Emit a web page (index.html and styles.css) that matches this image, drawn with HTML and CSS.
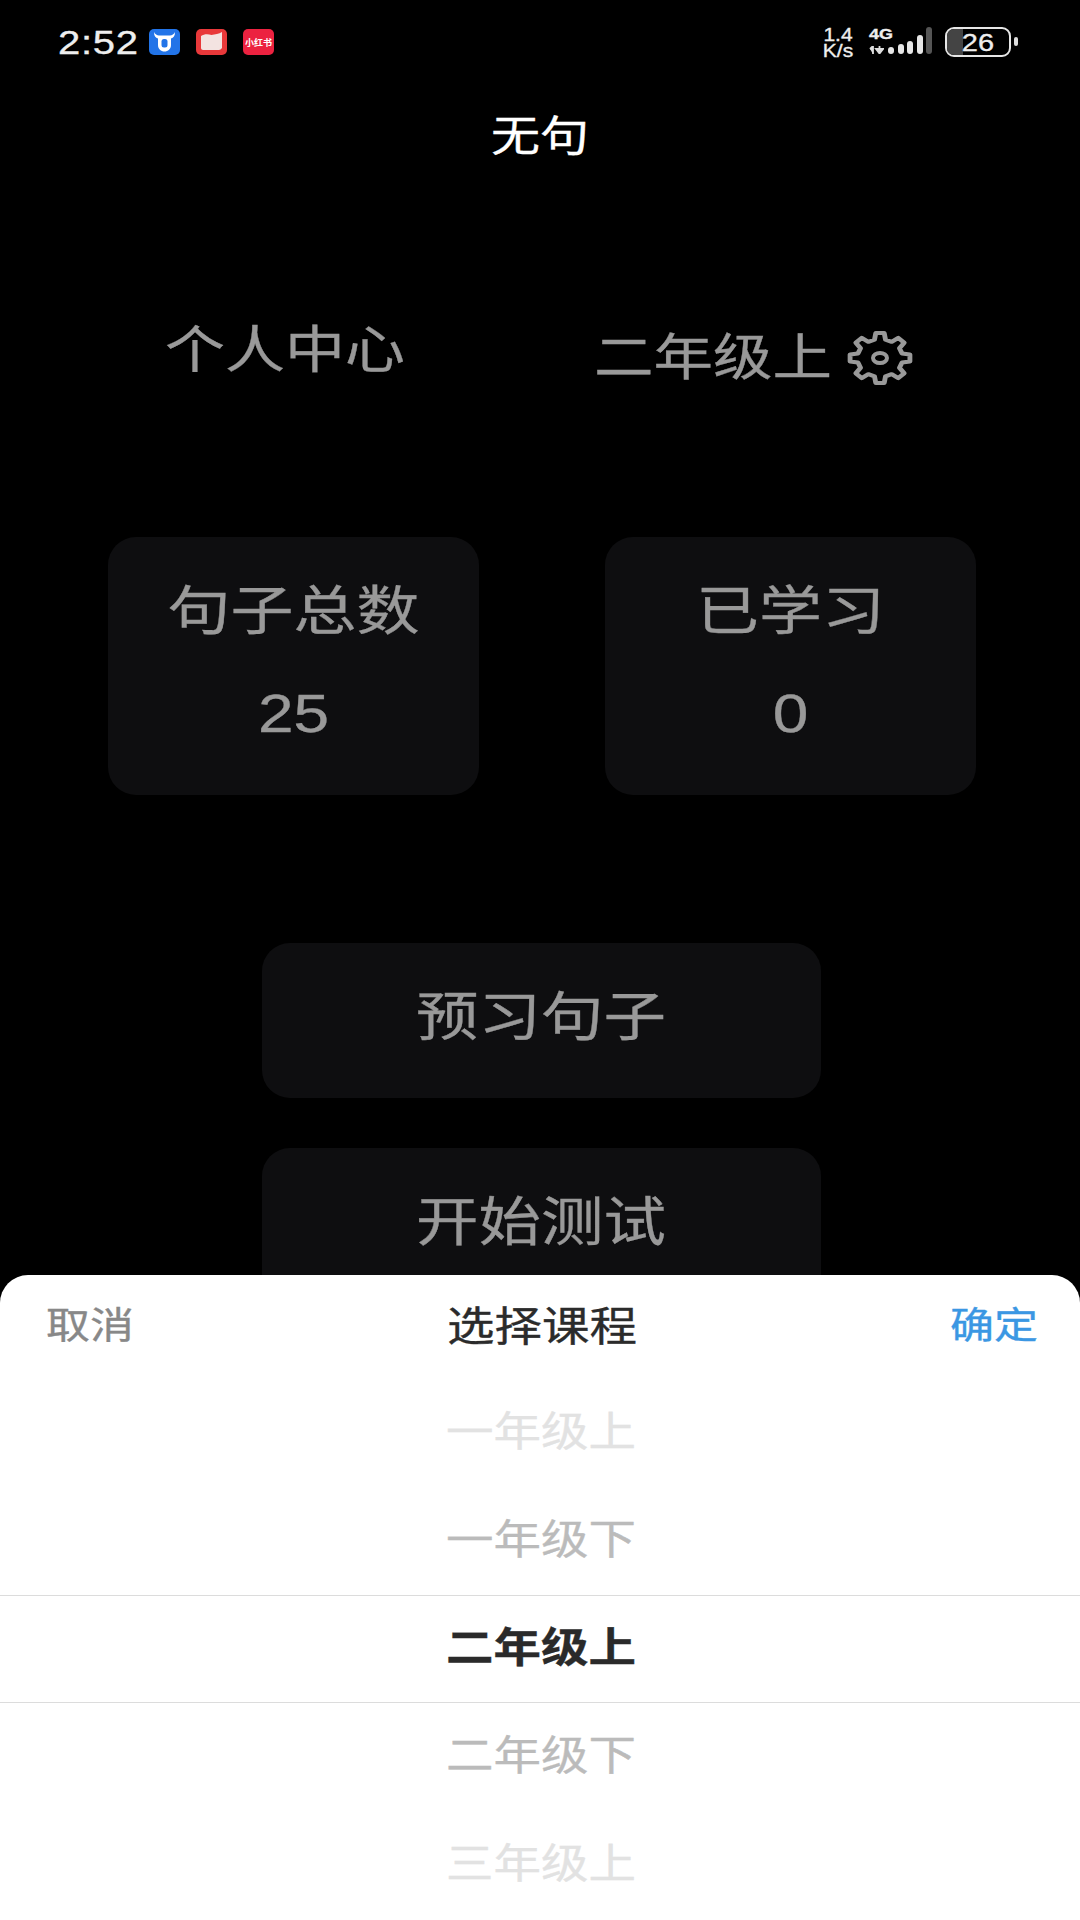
FILE: index.html
```html
<!DOCTYPE html>
<html lang="zh">
<head>
<meta charset="utf-8">
<title>无句</title>
<link rel="stylesheet" href="styles.css">
</head>
<body>
<div class="screen">
  <div class="statusbar">
    <span class="clock">2:52</span>
    <div class="notifs">
      <svg class="notif" viewBox="0 0 31 26"><rect width="31" height="26" rx="5" fill="#2274e8"/><path d="M5 3c0 4 1.500 6 4 6.500V16c0 4 3 6.500 6.500 6.500S22 20 22 16V9.500c2.500-.5 4-2.500 4-6.500-1 2-3 3.500-5 3.500H10C8 6.500 6 5 5 3z" fill="#fff"/><rect x="12.500" y="10" width="6" height="8.500" rx="2.500" fill="#2274e8"/></svg>
      <svg class="notif" viewBox="0 0 31 26"><rect width="31" height="26" rx="5" fill="#e8383a"/><path d="M5 7c3-2 7-2 10.500-1C19 5 23 5 26 3v16c-1 1-2 2-3 2H7c-1 0-2-1-2-2z" fill="#f3e3e1"/></svg>
      <div class="notif badge-red"><span>小红书</span></div>
    </div>
    <div class="status-right">
      <div class="speed"><span>1.4</span><span>K/s</span></div>
      <div class="net">
        <span class="net-label">4G</span>
        <svg class="arrows" viewBox="0 0 15 8"><path d="M4 8V0L1 3M7 3h7l-3.500 4.500zM10.500 0v4" stroke="#ddd" stroke-width="1.800" fill="#ddd"/></svg>
      </div>
      <div class="bars">
        <i class="b1"></i><i class="b2"></i><i class="b3"></i><i class="b4"></i><i class="b5"></i>
      </div>
      <div class="battery"><div class="battery-fill"></div><span class="battery-num">26</span></div>
      <div class="battery-cap"></div>
    </div>
  </div>

  <h1 class="title">无句</h1>

  <div class="profile-row">
    <span class="profile-name">个人中心</span>
    <div class="course">
      <span class="course-name">二年级上</span>
      <svg class="gear" viewBox="0 0 66 56">
        <g transform="translate(33 28) scale(1.08 .9)">
          <path d="M20.400-5.100L27.700-3.900V3.900L20.400 5.100L18 10.800L22.400 16.900L16.900 22.400L10.800 18L5.100 20.400L3.900 27.700H-3.900L-5.100 20.400L-10.800 18L-16.900 22.400L-22.400 16.900L-18 10.800L-20.400 5.100L-27.700 3.900V-3.900L-20.400-5.100L-18-10.800L-22.400-16.900L-16.900-22.400L-10.800-18L-5.100-20.400L-3.900-27.700H3.900L5.100-20.400L10.800-18L16.900-22.400L22.400-16.900L18-10.800Z" fill="none" stroke="#999" stroke-width="4.500" stroke-linejoin="round"/>
        </g>
        <ellipse cx="33" cy="28" rx="7" ry="5" fill="none" stroke="#999" stroke-width="4"/>
      </svg>
    </div>
  </div>

  <div class="stats">
    <div class="card"><div class="card-label">句子总数</div><div class="card-value">25</div></div>
    <div class="card"><div class="card-label">已学习</div><div class="card-value">0</div></div>
  </div>

  <div class="actions">
    <div class="action"><span class="action-text">预习句子</span></div>
    <div class="action"><span class="action-text">开始测试</span></div>
  </div>

  <div class="sheet">
    <div class="sheet-head">
      <span class="cancel">取消</span>
      <span class="sheet-title">选择课程</span>
      <span class="confirm">确定</span>
    </div>
    <div class="picker">
      <div class="opt far"><span>一年级上</span></div>
      <div class="opt near"><span>一年级下</span></div>
      <div class="opt current"><span>二年级上</span></div>
      <div class="opt near"><span>二年级下</span></div>
      <div class="opt far"><span>三年级上</span></div>
    </div>
  </div>
</div>
</body>
</html>
```
FILE: styles.css
```css
* { box-sizing: border-box; }
html, body { margin: 0; padding: 0; background: #000; }
body { font-family: "Liberation Sans", "Noto Sans CJK SC", sans-serif; }

.screen {
  position: relative;
  width: 1080px;
  height: 1920px;
  overflow: hidden;
  background: #000;
  color: #999;
}

/* The device font is drawn wider than it is tall, so text is flattened a little. */
.clock, .speed span, .net-label, .battery-num,
.title, .profile-name, .course-name,
.card-label, .card-value, .action-text,
.cancel, .confirm, .sheet-title, .opt span {
  display: block;
  transform: scaleY(.85);
  -webkit-text-stroke: .4px currentColor;
}

/* status bar */
.statusbar {
  display: flex;
  align-items: center;
  height: 84px;
  padding: 0 62px 0 58px;
  color: #eee;
}
.clock { font-size: 40px; letter-spacing: .7px; width: 91px; }
.notifs { display: flex; gap: 16px; }
.notif { width: 31px; height: 26px; display: block; }
.badge-red {
  border-radius: 5px;
  background: #ec2240;
  color: #fff;
  font-size: 9px;
  font-weight: 700;
  display: flex;
  align-items: center;
  justify-content: center;
  white-space: nowrap;
}
.status-right { margin-left: auto; display: flex; align-items: flex-start; padding-top: 2px; }
.speed {
  display: flex;
  flex-direction: column;
  align-items: center;
  font-size: 21px;
  line-height: 16px;
  width: 34px;
  margin-right: 14px;
}
.net { display: flex; flex-direction: column; width: 19px; align-items: flex-start; }
.net-label { font-size: 18px; font-weight: 700; line-height: 15px; white-space: nowrap; }
.arrows { width: 15px; height: 8px; margin-top: 4px; }
.bars { display: flex; align-items: flex-end; gap: 3.500px; height: 27px; }
.bars i { width: 6px; background: #e6e6e6; border-radius: 3px; display: block; }
.bars .b1 { height: 7px; }
.bars .b2 { height: 10px; }
.bars .b3 { height: 13px; }
.bars .b4 { height: 19px; }
.bars .b5 { height: 27px; background: #555; }
.battery {
  position: relative;
  width: 66px;
  height: 30px;
  margin-left: 13px;
  border: 2px solid #e6e6e6;
  border-radius: 9px;
  overflow: hidden;
  display: flex;
  align-items: center;
  justify-content: center;
}
.battery-fill { position: absolute; left: 0; top: 0; bottom: 0; width: 26%; background: #444; }
.battery-num { position: relative; font-size: 29px; line-height: 26px; color: #eee; }
.battery-cap { width: 4px; height: 9px; background: #ddd; border-radius: 2px; margin: 10px 0 0 3px; }

/* header */
.title {
  margin: 25px 0 0;
  font-size: 49px;
  font-weight: 400;
  line-height: 56px;
  text-align: center;
  color: #fff;
}

.profile-row { display: flex; margin-top: 152px; padding-left: 165px; align-items: flex-start; }
.profile-name { font-size: 60px; line-height: 68px; width: 430px; }
.course { display: flex; align-items: center; gap: 15px; margin-top: 7px; margin-left: -1px; }
.course-name { font-size: 59.500px; line-height: 68px; }
.gear { width: 66px; height: 56px; flex: none; }

/* stat cards */
.stats { display: flex; gap: 126px; margin-top: 145px; padding-left: 108px; }
.card {
  width: 371px;
  height: 258px;
  border-radius: 28px;
  background: #0e0e10;
  text-align: center;
}
.card-label { font-size: 63px; line-height: 68px; margin-top: 40px; }
.card-value { font-size: 64px; line-height: 64px; margin-top: 36px; }

/* main actions */
.actions { display: flex; flex-direction: column; align-items: center; gap: 50px; margin-top: 148px; padding-left: 2px; }
.action {
  width: 559px;
  height: 155px;
  border-radius: 28px;
  background: #0e0e10;
  padding-bottom: 17px;
  display: flex;
  align-items: center;
  justify-content: center;
}
.action-text { font-size: 62.500px; }

/* course picker sheet */
.sheet {
  position: absolute;
  left: 0;
  right: 0;
  top: 1275px;
  bottom: 0;
  background: #fff;
  border-radius: 28px 28px 0 0;
  overflow: hidden;
}
.sheet-head {
  display: flex;
  align-items: center;
  justify-content: space-between;
  padding: 0 42px 8px 46px;
  height: 104px;
}
.cancel { color: #888; font-size: 44px; width: 110px; }
.confirm { color: #3b97e3; font-size: 44px; width: 110px; text-align: right; }
.sheet-title { color: #2b2b2b; font-size: 47.500px; }
.opt {
  height: 108px;
  padding: 0 0 9px 2px;
  display: flex;
  align-items: center;
  justify-content: center;
  font-size: 47.500px;
}
.far { color: #e2e2e2; }
.near { color: #bbb; }
.current {
  color: #2a2a2a;
  font-weight: 700;
  border-top: 1px solid #dcdcdc;
  border-bottom: 1px solid #dcdcdc;
}
```
